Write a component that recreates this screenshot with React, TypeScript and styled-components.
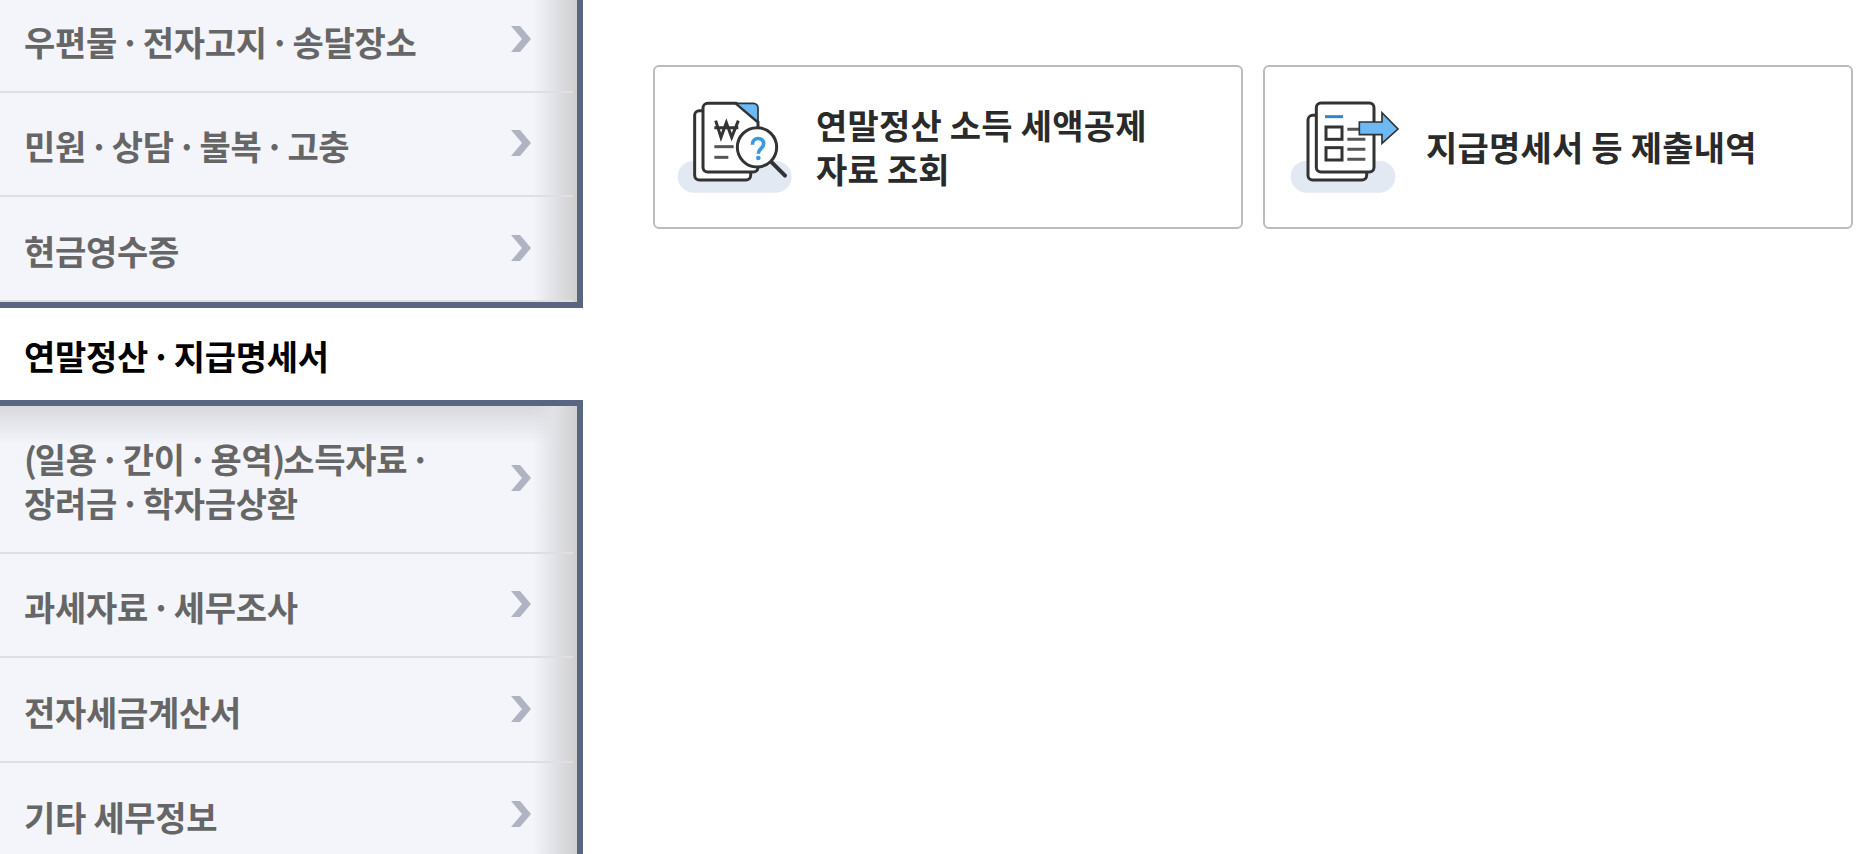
import React from "react";
import styled, { createGlobalStyle } from "styled-components";

const Global = createGlobalStyle`
  html, body { margin: 0; padding: 0; background: #fff; overflow: hidden; height: 854px; }
  body { font-family: "Noto Sans CJK KR", "Noto Sans", sans-serif; }
`;

const Page = styled.div`
  display: flex;
  align-items: flex-start;
  width: 1875px;
  height: 854px;
  overflow: hidden;
`;

const Sidebar = styled.nav`
  flex: none;
  width: 583px;
  margin-top: -11px;
  display: flex;
  flex-direction: column;
`;

const Panel = styled.ul<{ $top?: boolean }>`
  position: relative;
  list-style: none;
  margin: 0;
  padding: 0;
  background: #f3f5fb;
  border-right: 6px solid #586680;
  border-bottom: ${(p) => (p.$top ? "6px solid #586680" : "0")};
  border-top: ${(p) => (p.$top ? "0" : "6px solid #586680")};

  &::after {
    content: "";
    position: absolute;
    top: 0;
    bottom: 0;
    right: 0;
    width: 44px;
    background: linear-gradient(90deg, rgba(225, 226, 230, 0), #e1e2e6 48%, #cfcfcf);
    pointer-events: none;
  }
`;

const TopShade = styled.div`
  position: absolute;
  top: 0;
  left: 0;
  right: 0;
  height: 38px;
  background: linear-gradient(180deg, #d8d9dc, rgba(216, 217, 220, 0));
  pointer-events: none;
`;

const Row = styled.li<{ $height: number; $last?: boolean }>`
  position: relative;
  z-index: 1;
  height: ${(p) => p.$height}px;
  box-sizing: border-box;
  margin-right: 4px;
  display: flex;
  align-items: center;
  justify-content: space-between;
  padding: 0 41px 0 24px;
  border-bottom: ${(p) => (p.$last ? "0" : "2px solid #dfdfe3")};
`;

const Label = styled.span`
  font-size: 34px;
  line-height: 44px;
  font-weight: 700;
  letter-spacing: -0.3px;
  white-space: nowrap;
  color: #666;
  position: relative;
  top: 2px;
`;

const Sep = styled.span`
  margin: 0 3px;
`;

const Paren = styled.span`
  letter-spacing: -2px;
`;

const Active = styled.div`
  height: 92px;
  box-sizing: border-box;
  display: flex;
  align-items: center;
  padding-left: 24px;
  background: #fff;
`;

const ActiveLabel = styled(Label)`
  color: #000;
  top: 2px;
`;

const Main = styled.main`
  flex: none;
  display: flex;
  gap: 20px;
  padding: 65px 0 0 70px;
`;

const Card = styled.a`
  width: 590px;
  height: 164px;
  box-sizing: border-box;
  display: flex;
  align-items: center;
  background: #fff;
  border: 2px solid #bcbcbc;
  border-radius: 6px;
`;

const IconSlot = styled.div<{ $pad: number }>`
  flex: none;
  width: 161px;
  padding-left: ${(p) => p.$pad}px;
  box-sizing: border-box;
  display: flex;
`;

const CardText = styled.span`
  font-size: 34px;
  line-height: 44px;
  font-weight: 700;
  letter-spacing: 0.2px;
  white-space: nowrap;
  color: #2a2a2a;
`;

const ChevronSvg = styled.svg`
  flex: none;
  margin-bottom: 2px;
`;

const Chevron = () => (
  <ChevronSvg width="22" height="28" viewBox="0 0 22 28">
    <path d="M1 1h9l11 13-11 13H1l11-13z" fill="#b0b4c2" />
  </ChevronSvg>
);

const WonIcon = () => (
  <svg width="116" height="95" viewBox="78 120 348 285">
    <rect x="80" y="302" width="342" height="96" rx="48" fill="#e3e9f3" />
    <rect x="131" y="152" width="168" height="208" rx="14" fill="#fff" stroke="#333" strokeWidth="9" />
    <path d="M170 130h85l66 56v136a14 14 0 0 1-14 14H170a14 14 0 0 1-14-14V144a14 14 0 0 1 14-14z" fill="#fff" stroke="#333" strokeWidth="9" />
    <path d="M255 130h52a14 14 0 0 1 14 14v42z" fill="#6cb9f5" stroke="#333" strokeWidth="5" />
    <path d="M194 182l16 50 16-44 16 44 20-50M190 203h72" fill="none" stroke="#333" strokeWidth="9" />
    <path d="M190 260h58" stroke="#555" strokeWidth="9" />
    <path d="M190 292h42" stroke="#555" strokeWidth="9" />
    <path d="M360 305l42 42" stroke="#333" strokeWidth="12" strokeLinecap="round" />
    <circle cx="318" cy="262" r="59" fill="#fff" stroke="#333" strokeWidth="9" />
    <path d="M304 254c0-24 34-24 34-3 0 14-16 14-16 30" fill="none" stroke="#3b97e0" strokeWidth="11" />
    <circle cx="322" cy="294" r="7" fill="#3b97e0" />
  </svg>
);

const ReportIcon = () => (
  <svg width="110" height="95" viewBox="90 120 330 285">
    <rect x="92" y="302" width="314" height="96" rx="48" fill="#e3e9f3" />
    <rect x="144" y="166" width="176" height="194" rx="14" fill="#fff" stroke="#333" strokeWidth="9" />
    <rect x="169" y="129" width="173" height="207" rx="14" fill="#fff" stroke="#333" strokeWidth="9" />
    <path d="M195 170h54" stroke="#2d86cf" strokeWidth="9" />
    <rect x="198" y="201" width="48" height="37" fill="#fff" stroke="#333" strokeWidth="9" />
    <rect x="198" y="263" width="48" height="37" fill="#fff" stroke="#333" strokeWidth="9" />
    <path d="M262 208h54M262 238h54M262 268h54M262 298h54" stroke="#555" strokeWidth="9" />
    <path d="M298 186h68v-28l48 49-48 43v-26h-68z" fill="#6cb9f5" stroke="#333" strokeWidth="5" />
  </svg>
);

const D = () => <Sep>·</Sep>;

export default function App() {
  return (
    <Page>
      <Global />
      <Sidebar>
        <Panel $top>
          <Row $height={104}><Label>우편물<D />전자고지<D />송달장소</Label><Chevron /></Row>
          <Row $height={104}><Label>민원<D />상담<D />불복<D />고충</Label><Chevron /></Row>
          <Row $height={105}><Label>현금영수증</Label><Chevron /></Row>
        </Panel>
        <Active><ActiveLabel>연말정산<D />지급명세서</ActiveLabel></Active>
        <Panel>
          <TopShade />
          <Row $height={148}><Label><Paren>(</Paren>일용<D />간이<D />용역<Paren>)</Paren>소득자료<D /><br />장려금<D />학자금상환</Label><Chevron /></Row>
          <Row $height={104}><Label>과세자료<D />세무조사</Label><Chevron /></Row>
          <Row $height={105}><Label>전자세금계산서</Label><Chevron /></Row>
          <Row $height={104} $last><Label>기타 세무정보</Label><Chevron /></Row>
        </Panel>
      </Sidebar>
      <Main>
        <Card>
          <IconSlot $pad={22}><WonIcon /></IconSlot>
          <CardText>연말정산 소득 세액공제<br />자료 조회</CardText>
        </Card>
        <Card>
          <IconSlot $pad={25}><ReportIcon /></IconSlot>
          <CardText>지급명세서 등 제출내역</CardText>
        </Card>
      </Main>
    </Page>
  );
}
